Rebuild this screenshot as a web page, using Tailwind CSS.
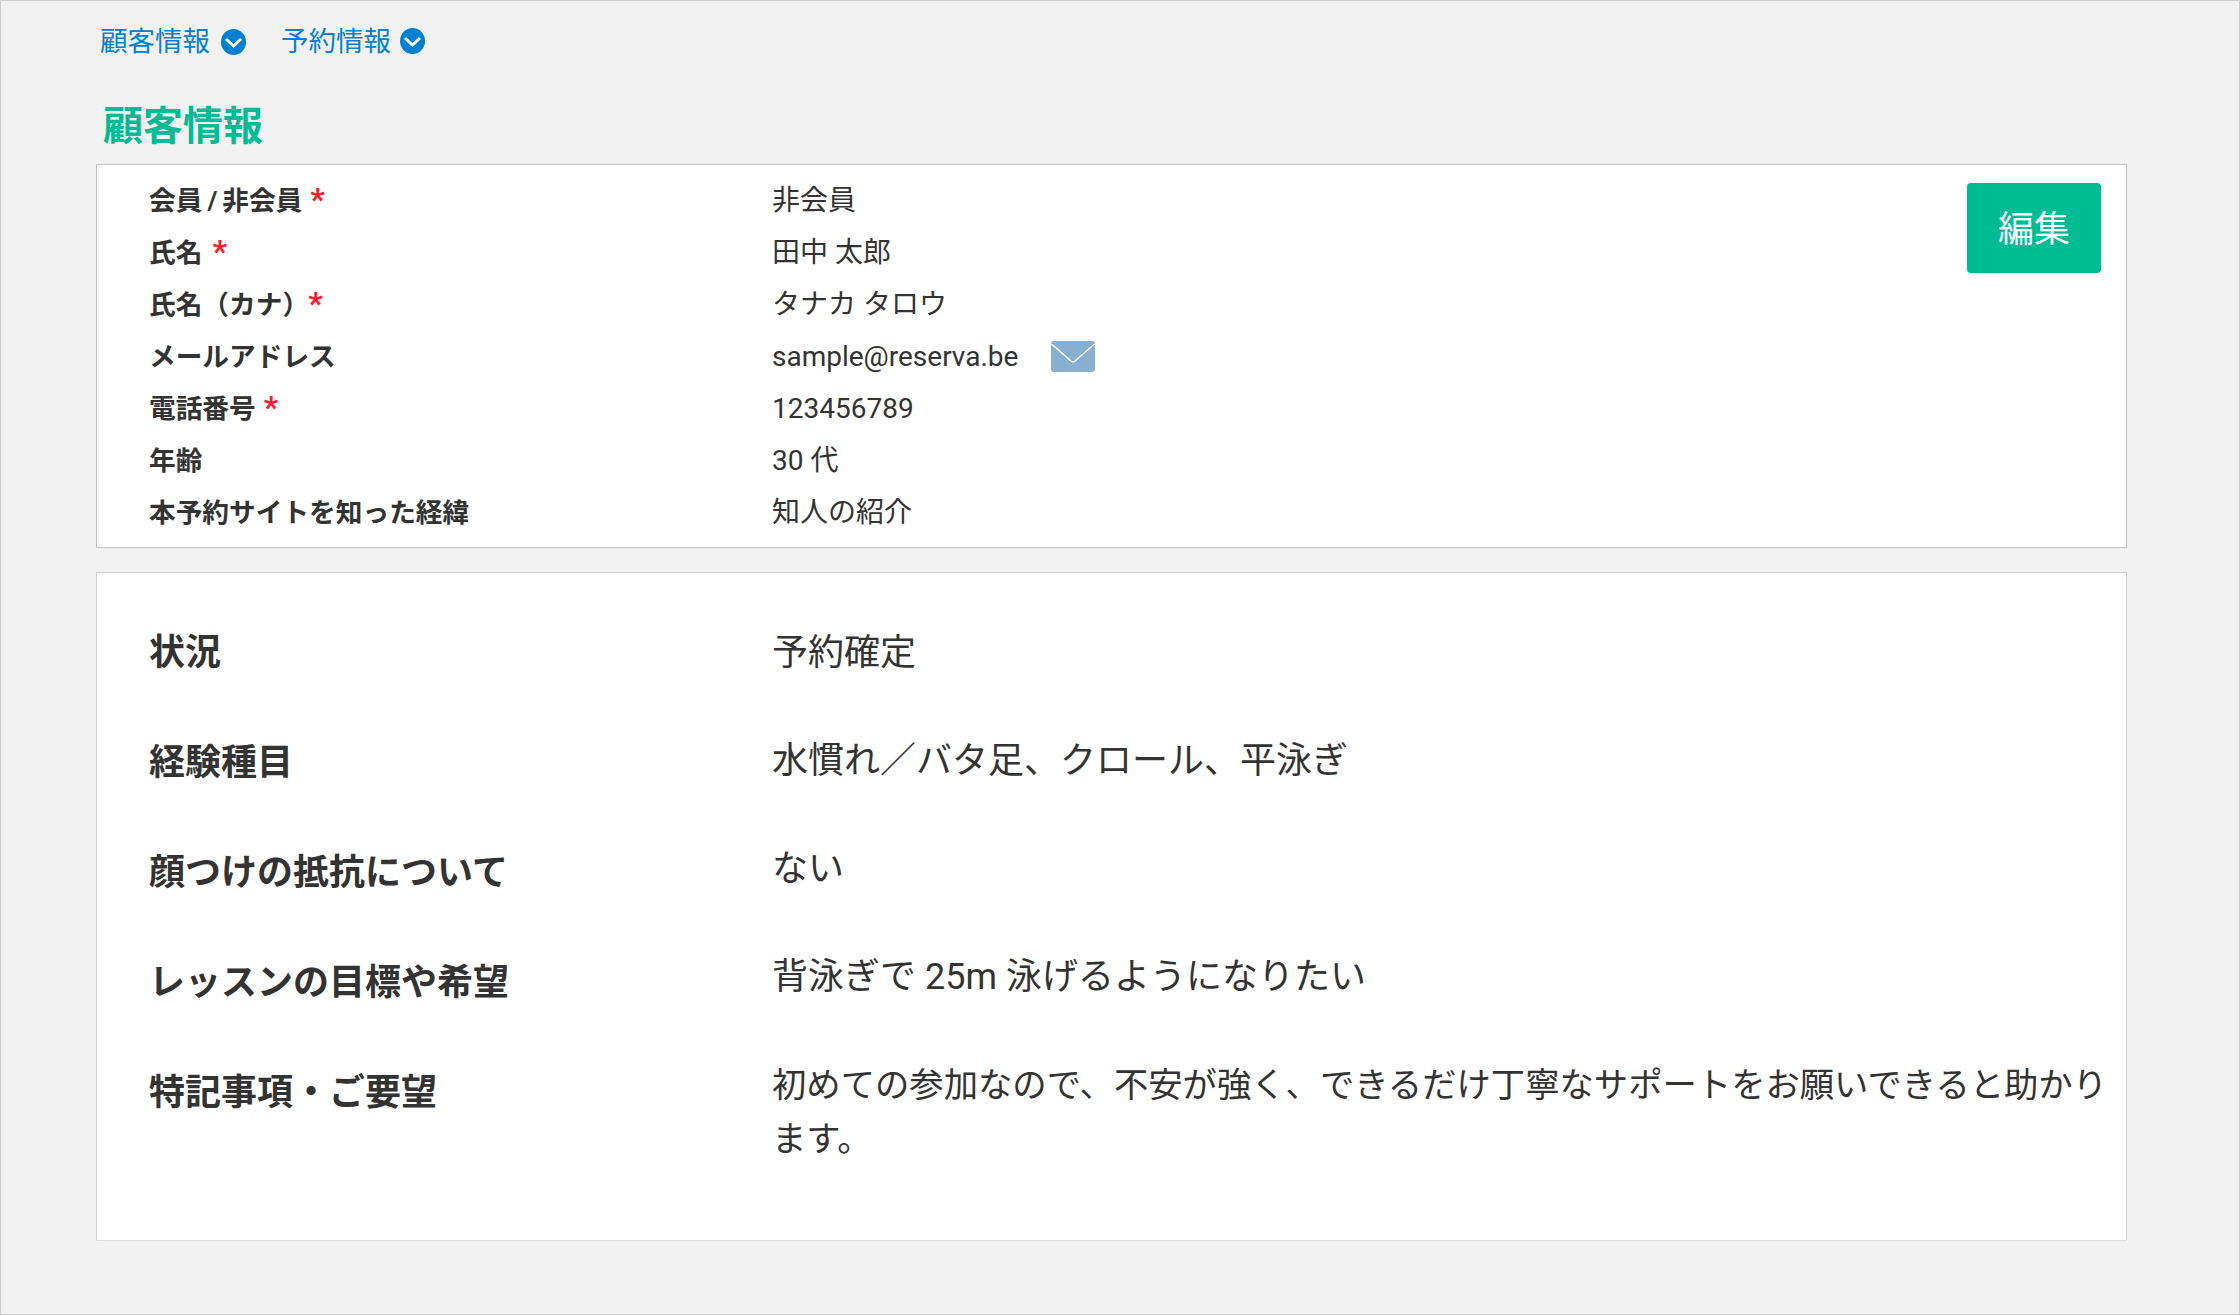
<!DOCTYPE html>
<html lang="ja">
<head>
    <meta charset="UTF-8">
    <title>顧客情報</title>
    <script src="https://cdn.jsdelivr.net/npm/@tailwindcss/browser@4"></script>
</head>
<body class="font-['Roboto','Noto_Sans_CJK_JP',sans-serif] text-[#333] bg-[#f2f2f2]">
    <div class="h-[1315px] border border-[#ccc] pl-[95px] pr-[112px] pt-[25px]">
        <div class="flex items-center h-[32px] ml-[4px] text-[27.5px] leading-[32px] text-[#0080d0]">
            <span>顧客情報</span>
            <svg class="w-[25px] h-[26px] ml-[11px] mr-[35px]" viewBox="0 0 25 26">
                <ellipse cx="12.5" cy="13" rx="12.5" ry="13" fill="#0080d0"/>
                <path d="M5 10 12.5 17 20 10" fill="none" stroke="#fff" stroke-width="3"/>
            </svg>
            <span>予約情報</span>
            <svg class="w-[25px] h-[26px] ml-[9px] -mt-[2px]" viewBox="0 0 25 26">
                <ellipse cx="12.5" cy="13" rx="12.5" ry="13" fill="#0080d0"/>
                <path d="M5 10 12.5 17 20 10" fill="none" stroke="#fff" stroke-width="3"/>
            </svg>
        </div>

        <h2 class="mt-[45px] ml-[7px] text-[40px] leading-[48px] font-bold text-[#00bc94]">顧客情報</h2>

        <div class="relative mt-[13px] h-[384px] bg-white border border-[#c4c4c4] pl-[52px] pt-[10px] text-[28px]">
            <a class="absolute top-[18px] right-[25px] w-[134px] h-[90px] pt-[3px] rounded-[4px] bg-[#00bc94] text-white text-[36px] flex items-center justify-center">編集</a>
            <div class="flex h-[52px] items-center"><div class="w-[623px] text-[26.7px] font-bold">会員<span class="mx-[5px]">/</span>非会員<span class="ml-[8px] text-[32px] leading-none text-[#ff1a2c]">*</span></div><div>非会員</div></div>
            <div class="flex h-[52px] items-center"><div class="w-[623px] text-[26.7px] font-bold">氏名<span class="ml-[10px] text-[32px] leading-none text-[#ff1a2c]">*</span></div><div>田中 太郎</div></div>
            <div class="flex h-[52px] items-center"><div class="w-[623px] text-[26.7px] font-bold">氏名（カナ）<span class="-ml-[1px] text-[32px] leading-none text-[#ff1a2c]">*</span></div><div>タナカ タロウ</div></div>
            <div class="flex h-[52px] items-center">
                <div class="w-[623px] text-[26.7px] font-bold">メールアドレス</div>
                <div>sample@reserva.be</div>
                <svg class="w-[44px] h-[31px] ml-[33px] -mt-[2px]" viewBox="0 0 44 31">
                    <rect width="44" height="31" rx="3" fill="#87b0d0"/>
                    <path d="M0.5 3 20 20Q22 21.5 24 20L43.5 3" fill="none" stroke="#fff" stroke-width="1.5"/>
                </svg>
            </div>
            <div class="flex h-[52px] items-center"><div class="w-[623px] text-[26.7px] font-bold">電話番号<span class="ml-[8px] text-[32px] leading-none text-[#ff1a2c]">*</span></div><div>123456789</div></div>
            <div class="flex h-[52px] items-center"><div class="w-[623px] text-[26.7px] font-bold">年齢</div><div>30 代</div></div>
            <div class="flex h-[52px] items-center"><div class="w-[623px] text-[26.7px] font-bold">本予約サイトを知った経緯</div><div>知人の紹介</div></div>
        </div>

        <div class="flex mt-[24px] h-[669px] bg-white border border-[#d0d0d0] border-b-[#ddd] pl-[52px] pr-[14px] pt-[53px] text-[36px] leading-[54px]">
            <div class="w-[623px] shrink-0 font-bold">
                <div class="h-[110px]">状況</div>
                <div class="h-[110px]">経験種目</div>
                <div class="h-[110px]">顔つけの抵抗について</div>
                <div class="h-[110px]">レッスンの目標や希望</div>
                <div>特記事項・ご要望</div>
            </div>
            <div>
                <div class="h-[108px]">予約確定</div>
                <div class="h-[108px]">水慣れ／バタ足、クロール、平泳ぎ</div>
                <div class="h-[108px]">ない</div>
                <div class="h-[108px]">背泳ぎで 25m 泳げるようになりたい</div>
                <div class="text-[34.35px]">初めての参加なので、不安が強く、できるだけ丁寧なサポートをお願いできると助かります。</div>
            </div>
        </div>
    </div>
</body>
</html>
